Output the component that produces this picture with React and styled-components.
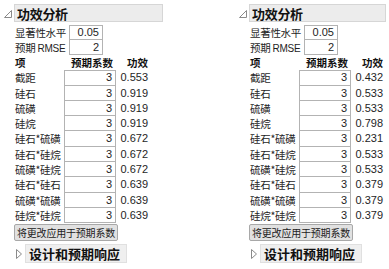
import React from "react";
import styled, { createGlobalStyle } from "styled-components";

const GlobalStyle = createGlobalStyle`
  html, body {
    margin: 0;
    padding: 0;
    background: #ffffff;
  }
  body {
    font-family: "Noto Sans CJK SC", "Liberation Sans", sans-serif;
    color: #1e1e1e;
  }
`;

const Page = styled.div`
  display: flex;
  gap: 75px;
  padding: 4px 0 0 3px;
  width: 389px;
  height: 269px;
  box-sizing: border-box;
  overflow: hidden;
`;

const Panel = styled.div`
  width: ${(p) => p.$width}px;
  display: flex;
  flex-direction: column;
`;

const TitleRow = styled.div`
  display: flex;
  align-items: center;
`;

const Toggle = styled.svg`
  width: 11px;
  height: 18px;
  flex: none;
`;

const TitleBox = styled.div`
  width: ${(p) => p.$width}px;
  height: 18px;
  box-sizing: border-box;
  background: #ececec;
  border: 1px solid #d6d6d6;
  display: flex;
  align-items: center;
  padding-left: 2px;
  font-size: 13px;
  font-weight: 700;
  color: #111;
  letter-spacing: -0.3px;
`;

const Body = styled.div`
  padding: 3px 0 0 12px;
  display: flex;
  flex-direction: column;
`;

const SettingRow = styled.div`
  display: flex;
  align-items: center;
  height: 15px;
`;

const Label = styled.div`
  width: ${(p) => p.$width || 49}px;
  font-size: 10.5px;
  line-height: 15px;
  white-space: nowrap;
  flex: none;
  letter-spacing: -0.3px;
`;

const Latin = styled.span`
  font-family: "Liberation Sans", "Noto Sans CJK SC", sans-serif;
  font-size: 10px;
  letter-spacing: -0.2px;
`;

const Field = styled.div`
  box-sizing: border-box;
  width: ${(p) => p.$width}px;
  height: 100%;
  background: #fff;
  border: 1px solid #b3b3b3;
  border-top: ${(p) => (p.$first ? "1px solid #b3b3b3" : "none")};
  text-align: right;
  padding-right: 3px;
  font-family: "Liberation Sans", sans-serif;
  font-size: 11px;
  line-height: ${(p) => (p.$first ? 13 : 14)}px;
  color: #1e1e1e;
`;

const Table = styled.div`
  display: grid;
  grid-template-columns: 49px 52px 32px;
  grid-auto-rows: 15.3px;
`;

const HeadCell = styled.div`
  font-size: 10.5px;
  font-weight: 700;
  line-height: 15px;
  text-align: ${(p) => p.$align || "left"};
  padding-right: ${(p) => (p.$align === "right" && p.$pad ? 3 : 0)}px;
  color: #111;
  white-space: nowrap;
`;

const Term = styled.div`
  font-size: 10.5px;
  line-height: 15.3px;
  white-space: nowrap;
  letter-spacing: -0.3px;
`;

const Power = styled.div`
  font-family: "Liberation Sans", sans-serif;
  font-size: 11px;
  line-height: 15.3px;
  text-align: right;
`;

const ApplyButton = styled.button`
  align-self: flex-start;
  margin: 1px 0 0 -1px;
  height: 17px;
  padding: 0 2px;
  background: #e1e1e1;
  border: 1px solid #a8a8a8;
  border-radius: 2px;
  font-family: "Noto Sans CJK SC", sans-serif;
  font-size: 10px;
  line-height: 15px;
  color: #222;
  letter-spacing: -0.2px;
`;

const DisclosureRow = styled.div`
  display: flex;
  align-items: center;
  margin-top: 3px;
  gap: 2px;
`;

const DisclosureBox = styled.div`
  height: 19px;
  box-sizing: border-box;
  background: #efefef;
  border: 1px solid #e0e0e0;
  padding: 0 6px 0 3px;
  display: flex;
  align-items: center;
  font-size: 13px;
  font-weight: 700;
  color: #111;
`;

const OpenIcon = () => (
  <Toggle viewBox="0 0 11 18">
    <polygon points="8.5,6.5 8.5,13.5 1.5,13.5" fill="#fff" stroke="#8a8a8a" strokeWidth="1" />
  </Toggle>
);

const ClosedIcon = () => (
  <svg width="8" height="12" viewBox="0 0 8 12">
    <polygon points="1.5,1.5 6.5,6 1.5,10.5" fill="#fff" stroke="#8a8a8a" strokeWidth="1" />
  </svg>
);

const terms = ["截距", "硅石", "硫磺", "硅烷", "硅石*硫磺", "硅石*硅烷", "硫磺*硅烷", "硅石*硅石", "硫磺*硫磺", "硅烷*硅烷"];

const PowerPanel = ({ width, titleWidth, powers }) => (
  <Panel $width={width}>
    <TitleRow>
      <OpenIcon />
      <TitleBox $width={titleWidth}>功效分析</TitleBox>
    </TitleRow>
    <Body>
      <SettingRow>
        <Label $width={54}>显著性水平</Label>
        <Field $width={34} $first>0.05</Field>
      </SettingRow>
      <SettingRow>
        <Label $width={54}>
          预期 <Latin>RMSE</Latin>
        </Label>
        <Field $width={34}>2</Field>
      </SettingRow>
      <Table>
        <HeadCell>项</HeadCell>
        <HeadCell $align="right" $pad>预期系数</HeadCell>
        <HeadCell $align="right">功效</HeadCell>
        {terms.map((t, i) => (
          <React.Fragment key={t}>
            <Term>{t}</Term>
            <Field $width={52} $first={i === 0}>3</Field>
            <Power>{powers[i]}</Power>
          </React.Fragment>
        ))}
      </Table>
      <ApplyButton>将更改应用于预期系数</ApplyButton>
      <DisclosureRow>
        <ClosedIcon />
        <DisclosureBox>设计和预期响应</DisclosureBox>
      </DisclosureRow>
    </Body>
  </Panel>
);

export default function App() {
  return (
    <>
      <GlobalStyle />
      <Page>
        <PowerPanel
          width={160}
          titleWidth={149}
          powers={["0.553", "0.919", "0.919", "0.919", "0.672", "0.672", "0.672", "0.639", "0.639", "0.639"]}
        />
        <PowerPanel
          width={148}
          titleWidth={138}
          powers={["0.432", "0.533", "0.533", "0.798", "0.231", "0.533", "0.533", "0.379", "0.379", "0.379"]}
        />
      </Page>
    </>
  );
}
